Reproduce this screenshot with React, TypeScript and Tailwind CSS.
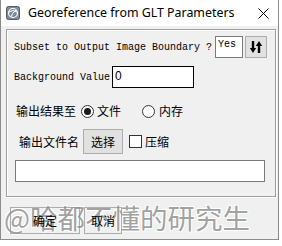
import React from "react";

const mono = { fontFamily: '"Liberation Mono", monospace' };
const cjk = { fontFamily: '"Noto Sans CJK SC", "Noto Sans", sans-serif' };

export default function App() {
  return (
    <div className="relative w-[282px] h-[246px] bg-white overflow-hidden">
      <div className="w-[279px] h-[240px] border-l border-r border-b border-[#8c8c8c] flex flex-col bg-[#f0f0f0]">
        {/* title bar */}
        <div className="h-[26px] bg-white flex items-center shrink-0">
          <svg width="14" height="14" viewBox="0 0 14 14" className="ml-[5px]">
            <rect x="0.5" y="0.5" width="13" height="13" rx="2" fill="#7d8a99" stroke="#4f5b69" />
            <circle cx="7" cy="7" r="4.5" fill="none" stroke="#fff" strokeWidth="1.2" />
            <path d="M3 6 Q7 3 11 6" fill="none" stroke="#fff" strokeWidth="1" />
            <path d="M5 11 Q6 7 10 4" fill="none" stroke="#fff" strokeWidth="1" />
          </svg>
          <span className="ml-[8px] text-[12.4px] text-black leading-none" style={{ fontFamily: '"Noto Sans", sans-serif' }}>
            Georeference from GLT Parameters
          </span>
          <svg width="11" height="11" viewBox="0 0 11 11" className="ml-auto mr-[9px]">
            <path d="M0.5 0.5 L10.5 10.5 M10.5 0.5 L0.5 10.5" stroke="#000" strokeWidth="1" />
          </svg>
        </div>
        {/* body */}
        <div className="flex-1 pt-[3px] pl-[5px]">
          <div className="w-[270px] h-[168px] border border-[#a0a0a0] shadow-[inset_1px_1px_0_#fff,1px_1px_0_#fff] flex flex-col pl-[7px]">
            {/* row 1 */}
            <div className="mt-[6px] flex items-center h-[22px]">
              <span className="text-[10px] text-black whitespace-pre" style={mono}>Subset to Output Image Boundary ?</span>
              <div className="ml-[3px] w-[28px] h-[22px] bg-white border border-[#7a7a7a] flex items-start pl-[2px] pt-[1px]">
                <span className="text-[10px] text-black leading-[14px]" style={mono}>Yes</span>
              </div>
              <div className="ml-[2px] w-[22px] h-[22px] bg-[#e1e1e1] border border-[#adadad] flex items-center justify-center">
                <svg width="14" height="14" viewBox="0 0 14 14">
                  <path d="M4 1 V9" stroke="#000" strokeWidth="2.4" />
                  <path d="M0.8 8 L4 13 L7.2 8 Z" fill="#000" />
                  <path d="M10 13 V5" stroke="#000" strokeWidth="2.4" />
                  <path d="M6.8 6 L10 1 L13.2 6 Z" fill="#000" />
                </svg>
              </div>
            </div>
            {/* row 2 */}
            <div className="mt-[8px] flex items-center h-[22px]">
              <span className="text-[10px] text-black whitespace-pre" style={mono}>Background Value</span>
              <div className="ml-[2px] w-[82px] h-[22px] bg-white border border-black flex items-start pl-[2px] pt-[2px]">
                <span className="text-[12px] text-black leading-[14px]" style={{ fontFamily: '"Liberation Sans", sans-serif' }}>0</span>
              </div>
            </div>
            {/* row 3 */}
            <div className="mt-[16px] flex items-center h-[14px] pl-[2px] text-[12px] text-black" style={cjk}>
              <span>输出结果至</span>
              <span className="ml-[5px] w-[13px] h-[13px] rounded-full border border-[#333] bg-white flex items-center justify-center">
                <span className="w-[7px] h-[7px] rounded-full bg-[#1a1a1a]" />
              </span>
              <span className="ml-[3px]">文件</span>
              <span className="ml-[21px] w-[13px] h-[13px] rounded-full border border-[#333] bg-white" />
              <span className="ml-[4px]">内存</span>
            </div>
            {/* row 4 */}
            <div className="mt-[11px] flex items-center h-[25px] pl-[5px] text-[12px] text-black" style={cjk}>
              <span>输出文件名</span>
              <div className="ml-[4px] w-[40px] h-[25px] bg-[#e1e1e1] border border-[#adadad] flex items-center justify-center">
                选择
              </div>
              <span className="ml-[6px] w-[13px] h-[13px] border border-[#333] bg-white" />
              <span className="ml-[3px]">压缩</span>
            </div>
            {/* row 5 */}
            <div className="mt-[6px] ml-[1px] w-[250px] h-[22px] bg-white border border-[#7a7a7a]" />
          </div>
          {/* bottom buttons */}
          <div className="relative z-10 mt-[10px] flex items-center pl-[4px] text-[12px] text-black" style={cjk}>
            <div className="w-[70px] h-[27px] border border-[#8f8f8f]/70 flex items-center justify-center">确定</div>
            <div className="ml-[4px] w-[38px] h-[27px] border border-[#8f8f8f]/70 flex items-center justify-center">取消</div>
          </div>
        </div>
      </div>
      {/* watermark */}
      <div
        className="absolute z-0 left-[4px] top-[204px] text-[27.5px] leading-none text-[#a2a2a2] whitespace-nowrap"
        style={{ ...cjk, textShadow: "1px 1px 0 #fff, -1px -1px 0 #fff, 1px -1px 0 #fff, -1px 1px 0 #fff" }}
      >
        @哈都不懂的研究生
      </div>
    </div>
  );
}
